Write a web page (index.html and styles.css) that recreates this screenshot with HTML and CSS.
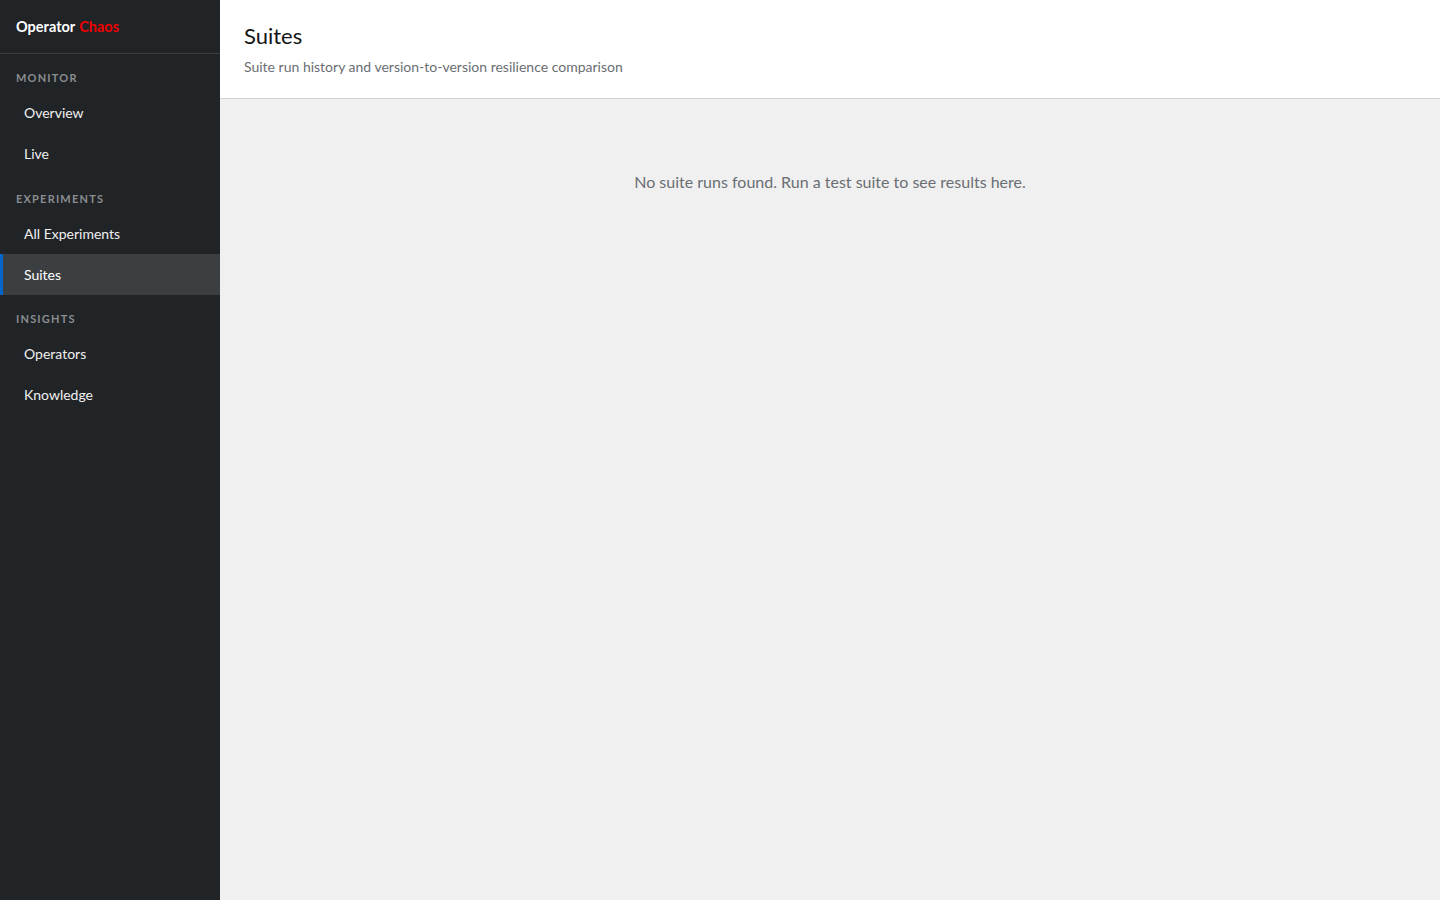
FILE: index.html
```html
<!DOCTYPE html>
<html lang="en">
<head>
    <meta charset="UTF-8">
    <meta name="viewport" content="width=device-width, initial-scale=1.0">
    <title>Suites - Operator Chaos</title>
    <link rel="stylesheet" href="styles.css">
</head>
<body>
    <div class="layout">
        <nav class="sidebar">
            <div class="brand">Operator <span class="brand-accent">Chaos</span></div>

            <div class="nav-section">
                <div class="nav-title">Monitor</div>
                <a class="nav-item" href="#">Overview</a>
                <a class="nav-item" href="#">Live</a>
            </div>

            <div class="nav-section">
                <div class="nav-title">Experiments</div>
                <a class="nav-item" href="#">All Experiments</a>
                <a class="nav-item active" href="#">Suites</a>
            </div>

            <div class="nav-section">
                <div class="nav-title">Insights</div>
                <a class="nav-item" href="#">Operators</a>
                <a class="nav-item" href="#">Knowledge</a>
            </div>
        </nav>

        <main class="main">
            <header class="page-header">
                <h1 class="page-title">Suites</h1>
                <p class="page-subtitle">Suite run history and version-to-version resilience comparison</p>
            </header>

            <section class="page-body">
                <div class="empty-state">No suite runs found. Run a test suite to see results here.</div>
            </section>
        </main>
    </div>
</body>
</html>
```

FILE: styles.css
```css
* {
    margin: 0;
    padding: 0;
    box-sizing: border-box;
}

body {
    font-family: Lato, "Noto Sans", sans-serif;
    font-size: 14px;
    color: #151515;
    background-color: #f0f0f0;
}

.layout {
    display: flex;
    min-height: 100vh;
}

/* sidebar */
.sidebar {
    width: 220px;
    flex-shrink: 0;
    background-color: #212427;
    color: #f0f0f0;
}

.brand {
    height: 54px;
    padding: 0 16px 1px;
    display: flex;
    align-items: center;
    font-size: 14.5px;
    font-weight: bold;
    color: #fff;
    border-bottom: 1px solid #3c3f42;
}

.brand-accent {
    color: #ee0000;
    margin-left: 4px;
}

.nav-section {
    padding-top: 16px;
}

.nav-title {
    padding: 0 16px;
    margin-bottom: 6px;
    line-height: 16.5px;
    font-size: 11px;
    font-weight: bold;
    letter-spacing: 1.2px;
    text-transform: uppercase;
    color: #8a8d90;
}

.nav-item {
    display: flex;
    align-items: center;
    height: 41px;
    border-left: 3px solid transparent;
    padding: 0 0 1px 21px;
    color: #f0f0f0;
    text-decoration: none;
    font-size: 14px;
}

.nav-item.active {
    background-color: #3c3f42;
    border-left-color: #0066cc;
    color: #fff;
}

/* main */
.main {
    flex: 1;
    display: flex;
    flex-direction: column;
}

.page-header {
    background-color: #fff;
    padding: 22px 24px 21px;
    border-bottom: 1px solid #d2d2d2;
}

.page-title {
    font-size: 22px;
    font-weight: normal;
    line-height: 28px;
}

.page-subtitle {
    margin-top: 6px;
    line-height: 21px;
    font-size: 14px;
    color: #6a6e73;
}

.page-body {
    padding: 24px;
}

.empty-state {
    padding-top: 47px;
    text-align: center;
    font-size: 16px;
    line-height: 24px;
    color: #6a6e73;
}
```
